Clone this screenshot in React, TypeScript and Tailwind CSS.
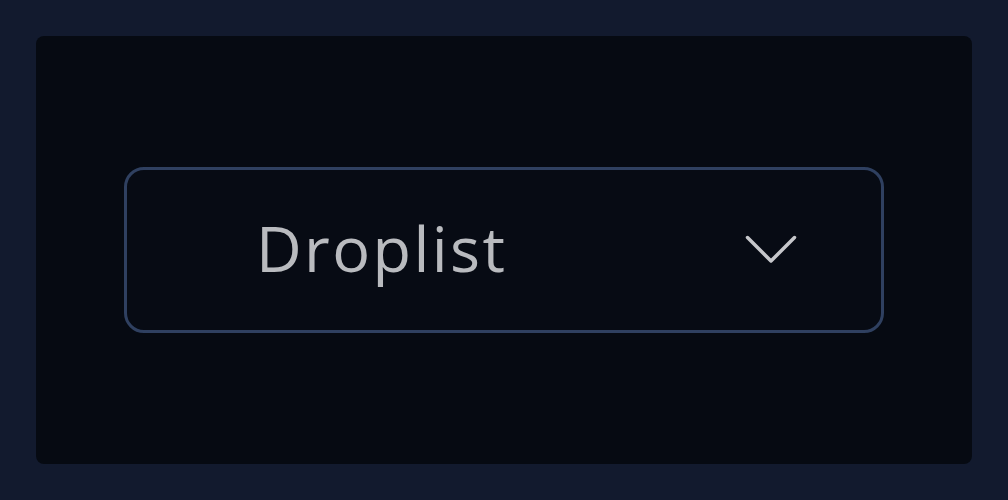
export default function App() {
  return (
    <div className="h-[500px] w-[1008px] bg-[#121a2e] p-9">
      <div className="flex h-full w-full items-center justify-center rounded-lg bg-[#060a12]">
        <div className="flex h-[166px] w-[760px] items-center justify-between rounded-[20px] border-[3px] border-[#2f4060] bg-[#070b14] pl-[129px] pr-[84px]">
          <span className="font-['Open_Sans',sans-serif] text-[63px] font-medium leading-none tracking-[2.4px] text-[#b9bbbf] -mt-[6px]">
            Droplist
          </span>
          <svg width="52" height="30" viewBox="0 0 52 30" fill="none">
            <path d="M2.5 2.5 L26 26 L49.5 2.5" stroke="#c6c7cb" strokeWidth="3.5" strokeLinecap="round" strokeLinejoin="round" />
          </svg>
        </div>
      </div>
    </div>
  );
}
